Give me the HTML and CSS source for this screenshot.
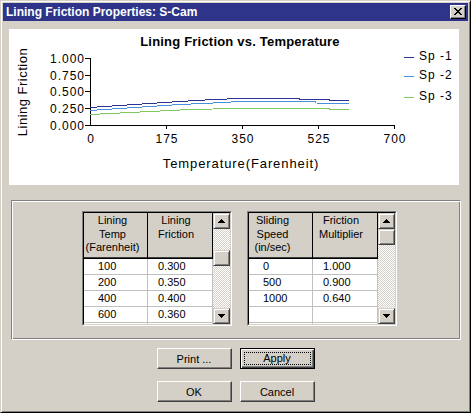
FILE: index.html
```html
<!DOCTYPE html>
<html>
<head>
<meta charset="utf-8">
<title>Lining Friction Properties: S-Cam</title>
<link rel="stylesheet" href="styles.css">
</head>
<body>
<div class="window">
  <div class="titlebar">
    <span class="title">Lining Friction Properties: S-Cam</span>
    <span class="close-btn">
      <svg width="8" height="7" viewBox="0 0 8 7"><path d="M0 0h2v1H0zM6 0h2v1H6zM1 1h2v1H1zM5 1h2v1H5zM2 2h4v1H2zM3 3h2v1H3zM2 4h4v1H2zM1 5h2v1H1zM5 5h2v1H5zM0 6h2v1H0zM6 6h2v1H6z" fill="#000"/></svg>
    </span>
  </div>

  <div class="client">
    <div class="chart-panel">
      <svg class="chart" width="450" height="156" viewBox="0 0 450 156">
        <text class="ct-title" x="231" y="17" text-anchor="middle">Lining Friction vs. Temperature</text>

        <text class="ct-axis-title" transform="translate(18,63) rotate(-90)" text-anchor="middle">Lining Friction</text>

        <g class="ct-tick" text-anchor="end">
          <text x="76" y="34">1.000</text>
          <text x="76" y="51">0.750</text>
          <text x="76" y="67">0.500</text>
          <text x="76" y="84">0.250</text>
          <text x="76" y="101">0.000</text>
        </g>
        <g class="ct-tick" text-anchor="middle">
          <text x="82" y="114">0</text>
          <text x="158" y="114">175</text>
          <text x="234" y="114">350</text>
          <text x="310" y="114">525</text>
          <text x="386" y="114">700</text>
        </g>

        <path d="M81.5 29V96.5H385.5M76 29.5H81M76 46.5H81M76 62.5H81M76 79.5H81M76 96.5H81M157.5 96V100M233.5 96V100M309.5 96V100M385.5 96V100" stroke="#000" stroke-width="1" fill="none" shape-rendering="crispEdges"/>

        <text class="ct-axis-title ct-x" x="232" y="139" text-anchor="middle">Temperature(Farenheit)</text>

        <g fill="none" stroke-width="1" shape-rendering="crispEdges">
          <polyline stroke="#2c3390" points="81,78.5 111,76.5 141,74.5 171,72.5 204,70.5 233,69.5 290,69.5 291,70.5 320,70.5 321,71.5 340,71.5"/>
          <polyline stroke="#4a8fdc" points="81,81.5 111,79.5 141,77.5 171,75.5 204,74 231,72.5 306,72.5 307,74 340,74.5"/>
          <polyline stroke="#7fc95e" points="81,85.5 111,84 141,82.5 171,81 204,80 241,79.5 320,79.5 321,80.5 340,80.5"/>
        </g>

        <g shape-rendering="crispEdges" stroke-width="1">
          <path d="M395 28.5H405" stroke="#2c3390"/>
          <path d="M395 47.5H405" stroke="#4a8fdc"/>
          <path d="M395 68.5H405" stroke="#7fc95e"/>
        </g>
        <g class="ct-tick">
          <text x="410" y="31">Sp -1</text>
          <text x="410" y="50">Sp -2</text>
          <text x="410" y="71">Sp -3</text>
        </g>
      </svg>
    </div>

    <div class="group">
      <div class="grid">
        <div class="grid-inner">
          <div class="grid-body">
            <div class="row head">
              <div class="cell c1 pad-l1">Lining<br>Temp<br>(Farenheit)</div>
              <div class="cell c2 pad-l2">Lining<br>Friction</div>
            </div>
            <div class="row"><div class="cell c1">100</div><div class="cell c2">0.300</div></div>
            <div class="row"><div class="cell c1">200</div><div class="cell c2">0.350</div></div>
            <div class="row"><div class="cell c1">400</div><div class="cell c2">0.400</div></div>
            <div class="row"><div class="cell c1">600</div><div class="cell c2">0.360</div></div>
            <div class="row"><div class="cell c1"></div><div class="cell c2"></div></div>
          </div>
          <div class="vscroll">
            <div class="sb-btn"><svg width="7" height="4" viewBox="0 0 7 4"><path d="M3 0h1v1h1v1h1v1h1v1H0V3h1V2h1V1h1z"/></svg></div>
            <div class="sb-track">
              <div class="sb-thumb thumb-mid"></div>
            </div>
            <div class="sb-btn"><svg width="7" height="4" viewBox="0 0 7 4"><path d="M0 0h7v1H6v1H5v1H4v1H3V3H2V2H1V1H0z"/></svg></div>
          </div>
        </div>
      </div>

      <div class="grid">
        <div class="grid-inner">
          <div class="grid-body">
            <div class="row head">
              <div class="cell c1 pad-r1">Sliding<br>Speed<br>(in/sec)</div>
              <div class="cell c2 pad-r2">Friction<br>Multiplier</div>
            </div>
            <div class="row"><div class="cell c1">0</div><div class="cell c2">1.000</div></div>
            <div class="row"><div class="cell c1">500</div><div class="cell c2">0.900</div></div>
            <div class="row"><div class="cell c1">1000</div><div class="cell c2">0.640</div></div>
            <div class="row"><div class="cell c1"></div><div class="cell c2"></div></div>
            <div class="row"><div class="cell c1"></div><div class="cell c2"></div></div>
          </div>
          <div class="vscroll">
            <div class="sb-btn"><svg width="7" height="4" viewBox="0 0 7 4"><path d="M3 0h1v1h1v1h1v1h1v1H0V3h1V2h1V1h1z"/></svg></div>
            <div class="sb-track">
              <div class="sb-thumb"></div>
            </div>
            <div class="sb-btn"><svg width="7" height="4" viewBox="0 0 7 4"><path d="M0 0h7v1H6v1H5v1H4v1H3V3H2V2H1V1H0z"/></svg></div>
          </div>
        </div>
      </div>
    </div>

    <div class="buttons">
      <div class="btn-row">
        <button class="btn">Print ...</button>
        <button class="btn btn-default"><span class="focus">Apply</span></button>
      </div>
      <div class="btn-row">
        <button class="btn">OK</button>
        <button class="btn">Cancel</button>
      </div>
    </div>
  </div>
</div>
</body>
</html>
```

FILE: styles.css
```css
* {
  box-sizing: border-box;
}

body {
  margin: 0;
  font-family: "Liberation Sans", Arial, sans-serif;
  background: #d4d0c8;
}

/* dialog frame */
.window {
  width: 471px;
  height: 413px;
  background: #d4d0c8;
  border: 1px solid;
  border-color: #d4d0c8 #000 #000 #d4d0c8;
  box-shadow: inset 1px 1px #fff, inset -1px -1px #808080;
  padding: 2px;
  display: flex;
  flex-direction: column;
}

.titlebar {
  height: 18px;
  background: #2d3489;
  display: flex;
  align-items: center;
  padding: 0 2px 0 3px;
}

.title {
  color: #fff;
  font-weight: bold;
  font-size: 12px;
  white-space: nowrap;
}

.close-btn {
  margin-left: auto;
  width: 16px;
  height: 14px;
  background: #d4d0c8;
  border: 1px solid;
  border-color: #fff #000 #000 #fff;
  box-shadow: inset -1px -1px #808080;
  display: flex;
  align-items: center;
  justify-content: center;
  padding: 0 1px 1px 0;
}

.close-btn svg {
  display: block;
}

.client {
  display: flex;
  flex-direction: column;
}

/* chart */
.chart-panel {
  width: 450px;
  height: 156px;
  margin: 8px 0 0 6px;
  background: #fff;
}

.chart {
  display: block;
}

.chart text {
  font-family: "Liberation Sans", Arial, sans-serif;
  fill: #000;
}

.ct-title {
  font-size: 13px;
  font-weight: bold;
  letter-spacing: 0.2px;
}

.ct-tick {
  font-size: 12px;
  letter-spacing: 1px;
}

.ct-axis-title {
  font-size: 13px;
  letter-spacing: 0.5px;
}

.ct-axis-title.ct-x {
  letter-spacing: 0.9px;
}

/* group box with the two tables */
.group {
  width: 450px;
  height: 140px;
  margin: 15px 0 0 8px;
  border: 1px solid;
  border-color: #808080 #fff #fff #808080;
  box-shadow: inset 1px 1px #fff, inset -1px -1px #808080;
  padding: 10px 0 0 70px;
  display: flex;
  gap: 15px;
}

.grid {
  width: 150px;
  height: 115px;
  border: 1px solid;
  border-color: #808080 #fff #fff #808080;
}

.grid-inner {
  height: 100%;
  border: 1px solid;
  border-color: #000 #d4d0c8 #d4d0c8 #000;
  display: flex;
  background: #fff;
}

.grid-body {
  flex: 1;
  overflow: hidden;
  font-size: 11px;
  color: #000;
}

.row {
  display: flex;
  height: 16px;
}

.cell {
  height: 16px;
  line-height: 15px;
  border-right: 1px solid #c0c0c0;
  border-bottom: 1px solid #c0c0c0;
  white-space: nowrap;
  overflow: hidden;
}

.cell.c1 {
  width: 64px;
  padding-left: 14px;
}

.cell.c2 {
  width: 65px;
  padding-left: 10px;
}

.row.head {
  height: 46px;
}

.row.head .cell {
  height: 46px;
  background: #d4d0c8;
  border-right: 1px solid #000;
  border-bottom: 1px solid #000;
  box-shadow: inset 0 -1px #404040;
  line-height: 13.5px;
  padding: 1px 0 0 0;
  text-align: center;
}

.row.head .cell.pad-l1 { padding-right: 6px; }
.row.head .cell.pad-l2 { padding-right: 8px; }
.row.head .cell.pad-r1 { padding-right: 16px; }
.row.head .cell.pad-r2 { padding-right: 8px; }

/* vertical scroll bar */
.vscroll {
  width: 17px;
  display: flex;
  flex-direction: column;
}

.sb-btn,
.sb-thumb {
  height: 16px;
  background: #d4d0c8;
  border: 1px solid;
  border-color: #d4d0c8 #404040 #404040 #d4d0c8;
  box-shadow: inset 1px 1px #fff, inset -1px -1px #808080;
}

.sb-btn {
  display: flex;
  align-items: center;
  justify-content: center;
}

.sb-btn svg {
  display: block;
  fill: #000;
}

.sb-track {
  flex: 1;
  background-color: #fff;
  background-image: conic-gradient(#d4d0c8 25%, #fff 0 50%, #d4d0c8 0 75%, #fff 0);
  background-size: 2px 2px;
}

.sb-thumb.thumb-mid {
  margin-top: 21px;
}

/* dialog buttons */
.buttons {
  margin-top: 8px;
  display: flex;
  flex-direction: column;
  gap: 12px;
}

.btn-row {
  display: flex;
  justify-content: center;
  gap: 8px;
}

.btn {
  width: 75px;
  height: 21px;
  margin: 0;
  padding: 0;
  font-family: "Liberation Sans", Arial, sans-serif;
  font-size: 11px;
  color: #000;
  background: #d4d0c8;
  border: 1px solid;
  border-color: #fff #404040 #404040 #fff;
  box-shadow: inset -1px -1px #808080;
  display: flex;
  align-items: center;
  justify-content: center;
}

.btn-default {
  border-color: #000;
  box-shadow: inset 1px 1px #fff, inset -1px -1px #404040, inset -2px -2px #808080;
  align-items: stretch;
}

.focus {
  flex: 1;
  margin: 3px;
  border: 1px dotted #000;
  display: flex;
  align-items: center;
  justify-content: center;
  line-height: 11px;
}
```
